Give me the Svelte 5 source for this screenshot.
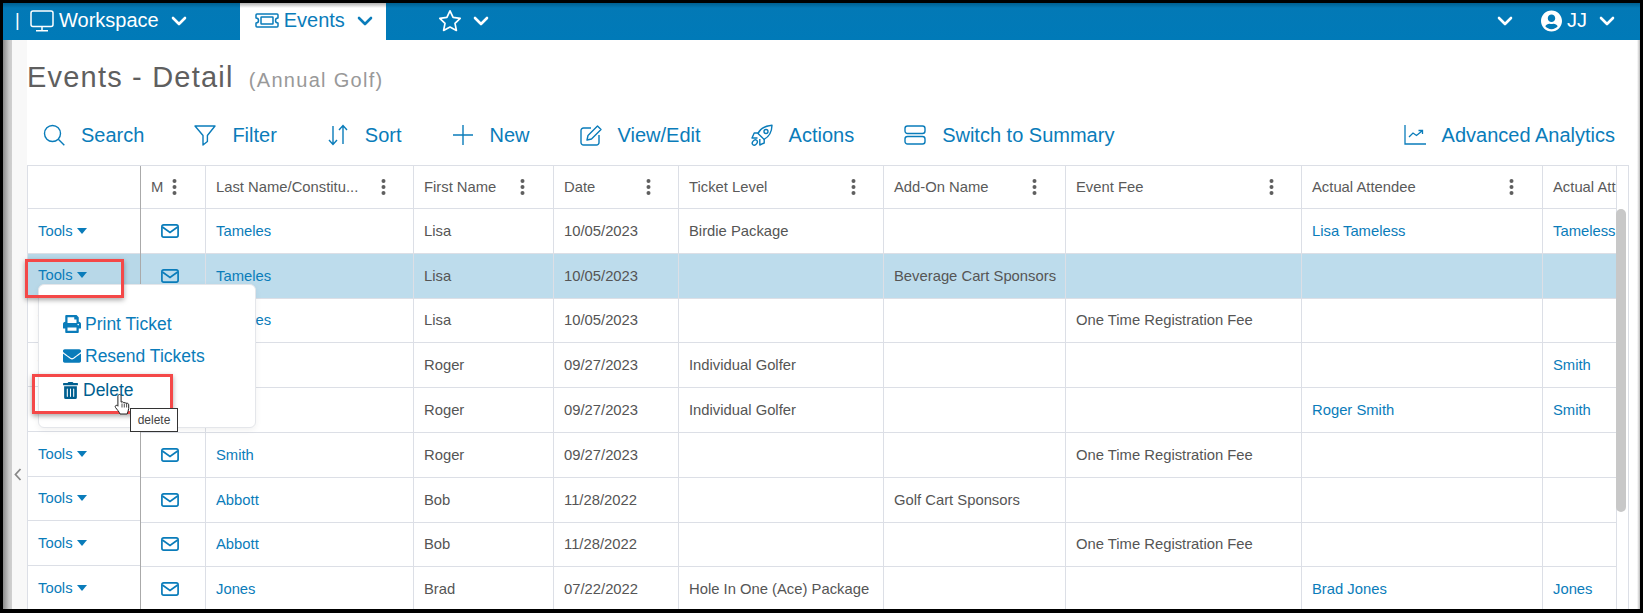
<script>
  const cols = [
    { name: 'M', w: 65, kebab: 31 },
    { name: 'Last Name/Constitu...', w: 208, kebab: 175 },
    { name: 'First Name', w: 140, kebab: 106 },
    { name: 'Date', w: 125, kebab: 92 },
    { name: 'Ticket Level', w: 205, kebab: 172 },
    { name: 'Add-On Name', w: 182, kebab: 148 },
    { name: 'Event Fee', w: 236, kebab: 203 },
    { name: 'Actual Attendee', w: 241, kebab: 207 },
    { name: 'Actual Att', w: 200, kebab: 0 }
  ];
  const rows = [
    ['Tameles', 'Lisa', '10/05/2023', 'Birdie Package', '', '', 'Lisa Tameless', 'Tameless'],
    ['Tameles', 'Lisa', '10/05/2023', '', 'Beverage Cart Sponsors', '', '', ''],
    ['Tameles', 'Lisa', '10/05/2023', '', '', 'One Time Registration Fee', '', ''],
    ['Smith', 'Roger', '09/27/2023', 'Individual Golfer', '', '', '', 'Smith'],
    ['Smith', 'Roger', '09/27/2023', 'Individual Golfer', '', '', 'Roger Smith', 'Smith'],
    ['Smith', 'Roger', '09/27/2023', '', '', 'One Time Registration Fee', '', ''],
    ['Abbott', 'Bob', '11/28/2022', '', 'Golf Cart Sponsors', '', '', ''],
    ['Abbott', 'Bob', '11/28/2022', '', '', 'One Time Registration Fee', '', ''],
    ['Jones', 'Brad', '07/22/2022', 'Hole In One (Ace) Package', '', '', 'Brad Jones', 'Jones']
  ];
  const widths = cols.map((c) => c.w + 'px').join(' ');
  const linkCols = [0, 6, 7];
</script>

{#snippet chevron()}
  <svg class="chev" viewBox="0 0 16 10" width="16" height="10"><path d="M2 2l6 6 6-6" fill="none" stroke="currentColor" stroke-width="2.6" stroke-linecap="round" stroke-linejoin="round"/></svg>
{/snippet}

{#snippet mail()}
  <svg viewBox="0 0 18 14" width="18" height="14"><rect x="0.9" y="0.9" width="16.2" height="12.2" rx="1.8" fill="none" stroke="#0a7cba" stroke-width="1.7"/><path d="M1.4 3l7.6 5.4L16.6 3" fill="none" stroke="#0a7cba" stroke-width="1.7"/></svg>
{/snippet}

<div class="frame">
  <nav class="nav">
    <span class="bar">|</span>
    <div class="nav-item workspace">
      <svg viewBox="0 0 24 22" width="24" height="22" fill="none" stroke="#fff" stroke-width="1.5"><rect x="1" y="1" width="22" height="15.500" rx="2"/><path d="M12 16.500v4M6 20.700h12"/></svg>
      <span>Workspace</span>
      {@render chevron()}
    </div>
    <div class="nav-item tab">
      <svg viewBox="0 0 24 15" width="24" height="15" fill="none" stroke="#0a7cba" stroke-width="1.5"><path d="M2 1h20a1 1 0 0 1 1 1v3a2.500 2.500 0 0 0 0 5v3a1 1 0 0 1-1 1H2a1 1 0 0 1-1-1v-3a2.500 2.500 0 0 0 0-5V2a1 1 0 0 1 1-1z" stroke-linejoin="round"/><rect x="6" y="4" width="12" height="7" rx="0.5"/></svg>
      <span>Events</span>
      {@render chevron()}
    </div>
    <div class="nav-item star">
      <svg viewBox="0 0 24 23" width="24" height="23" fill="none" stroke="#fff" stroke-width="1.7" stroke-linejoin="round"><path d="M12 1.800l3.100 6.600 7.100.9-5.200 5 1.400 7.100L12 18l-6.400 3.400L7 14.300l-5.200-5 7.100-.9z"/></svg>
      {@render chevron()}
    </div>
    <div class="nav-right">
      {@render chevron()}
      <svg class="user" viewBox="0 0 496 512" width="21" height="22" fill="#fff"><path d="M248 8C111 8 0 119 0 256s111 248 248 248 248-111 248-248S385 8 248 8zm0 96c48.6 0 88 39.4 88 88s-39.4 88-88 88-88-39.4-88-88 39.4-88 88-88zm0 344c-58.7 0-111.3-26.6-146.5-68.2 18.8-35.4 55.6-59.8 98.5-59.8 2.4 0 4.8.4 7.1 1.1 13 4.2 26.6 6.9 40.9 6.9 14.3 0 28-2.7 40.9-6.9 2.3-.7 4.7-1.1 7.1-1.1 42.9 0 79.7 24.4 98.5 59.8C359.3 421.4 306.7 448 248 448z"/></svg>
      <span class="jj">JJ</span>
      {@render chevron()}
    </div>
  </nav>

  <div class="body">
    <aside class="rail">
      <svg viewBox="0 0 8 13" width="8" height="13"><path d="M6.500 1L1.500 6.500l5 5.500" fill="none" stroke="#888" stroke-width="1.800"/></svg>
    </aside>

    <main class="main">
      <h1 class="title">Events - Detail <small>(Annual Golf)</small></h1>

      <div class="toolbar">
        <button class="tool">
          <svg viewBox="0 0 22 22" width="22" height="22" fill="none" stroke="currentColor" stroke-width="1.4"><circle cx="9.500" cy="9.500" r="8"/><path d="M15.300 15.300l6 6"/></svg>
          Search
        </button>
        <button class="tool">
          <svg viewBox="0 0 22 22" width="22" height="22" fill="none" stroke="currentColor" stroke-width="1.4" stroke-linejoin="round"><path d="M1 2h20l-7.600 9.500v6L9 21v-9.500z"/></svg>
          Filter
        </button>
        <button class="tool">
          <svg viewBox="0 0 22 22" width="22" height="22" fill="none" stroke="currentColor" stroke-width="1.4"><path d="M6 2v18M2 16l4 4.500 4-4.500M16 20V2M12 6l4-4.500L20 6"/></svg>
          Sort
        </button>
        <button class="tool">
          <svg viewBox="0 0 22 22" width="22" height="22" fill="none" stroke="currentColor" stroke-width="1.4"><path d="M11 1v20M1 11h20"/></svg>
          New
        </button>
        <button class="tool">
          <svg viewBox="0 0 22 22" width="22" height="22" fill="none" stroke="currentColor" stroke-width="1.4" stroke-linejoin="round"><path d="M11 4H3.500A2.500 2.500 0 0 0 1 6.500v12A2.500 2.500 0 0 0 3.500 21h13a2.500 2.500 0 0 0 2.500-2.500V11"/><path d="M8 11.500L17.500 2 21 5.500 11.500 15 7 16z"/></svg>
          View/Edit
        </button>
        <button class="tool">
          <svg viewBox="0 0 22 22" width="22" height="22" fill="none" stroke="currentColor" stroke-width="1.400" stroke-linejoin="round"><path d="M7 9.500C9 5 14 1.800 21 1.200 20.800 8 17.500 13 13 15.300z"/><circle cx="15" cy="7.500" r="2"/><path d="M7.300 9H3.200L1 14h5.500M13.200 15v4L8.800 21v-6"/><ellipse cx="3.800" cy="18.500" rx="2.200" ry="2.900" transform="rotate(40 3.800 18.500)"/></svg>
          Actions
        </button>
        <button class="tool">
          <svg viewBox="0 0 22 22" width="22" height="22" fill="none" stroke="currentColor" stroke-width="1.4"><rect x="1" y="2" width="20" height="7.500" rx="2.500"/><rect x="1" y="12.500" width="20" height="7.500" rx="2.500"/></svg>
          Switch to Summary
        </button>
        <button class="tool analytics">
          <svg viewBox="0 0 22 20" width="22" height="20" fill="none" stroke="currentColor" stroke-width="1.3"><path d="M1 0v19h21"/><path d="M5 12l4-4 3.500 2.500L18 6m-3.500-.5H18.500V9"/></svg>
          Advanced Analytics
        </button>
      </div>

      <div class="table">
        <div class="frozen">
          <div class="frozen-head"></div>
          {#each rows as row, i}
            <div class="frozen-row" class:active={i === 1}>
              <span class="link">Tools</span>
              <svg viewBox="0 0 10 6" width="10" height="6"><path d="M0 0h10L5 6z" fill="#0a7cba"/></svg>
            </div>
          {/each}
        </div>

        <div class="pane">
          <div class="head" style="grid-template-columns: {widths}">
            {#each cols as c}
              <div class="th">
                <span class="th-label">{c.name}</span>
                {#if c.kebab}
                  <svg class="kebab" style="left: {c.kebab}px" viewBox="0 0 5 18" width="5" height="18"><circle cx="2.500" cy="3" r="2" /><circle cx="2.500" cy="9" r="2" /><circle cx="2.500" cy="15" r="2" /></svg>
                {/if}
              </div>
            {/each}
          </div>
          {#each rows as row, i}
            <div class="row" class:active={i === 1} style="grid-template-columns: {widths}">
              <div class="td center">{@render mail()}</div>
              {#each row as cell, j}
                <div class="td" class:link={linkCols.includes(j)}>{cell}</div>
              {/each}
            </div>
          {/each}
        </div>

        <div class="gutter"><div class="thumb"></div></div>

        <div class="menu">
          <div class="menu-item">
            <svg viewBox="0 0 512 512" width="18" height="18" fill="currentColor"><path d="M448 192V77.250c0-8.490-3.370-16.620-9.370-22.630L393.370 9.370c-6-6-14.140-9.370-22.630-9.370H96C78.330 0 64 14.330 64 32v160c-35.350 0-64 28.650-64 64v112c0 8.840 7.160 16 16 16h48v96c0 17.670 14.330 32 32 32h320c17.670 0 32-14.330 32-32v-96h48c8.840 0 16-7.160 16-16V256c0-35.350-28.650-64-64-64zm-64 256H128v-96h256v96zm0-224H128V64h192v48c0 8.840 7.160 16 16 16h48v96zm48 72c-13.250 0-24-10.750-24-24 0-13.260 10.750-24 24-24s24 10.740 24 24c0 13.250-10.750 24-24 24z"/></svg>
            Print Ticket
          </div>
          <div class="menu-item">
            <svg viewBox="0 64 512 384" width="18" height="14" fill="currentColor"><path d="M502.300 190.800c3.900-3.100 9.700-.2 9.700 4.700V400c0 26.500-21.500 48-48 48H48c-26.500 0-48-21.500-48-48V195.600c0-5 5.700-7.800 9.700-4.700 22.400 17.400 52.100 39.500 154.100 113.600 21.100 15.400 56.700 47.800 92.200 47.600 35.700.3 72-32.800 92.300-47.600 102-74.100 131.600-96.300 154-113.700zM256 320c23.200.4 56.600-29.200 73.400-41.400 132.700-96.300 142.800-104.700 173.400-128.700 5.800-4.500 9.200-11.500 9.200-18.900v-19c0-26.500-21.500-48-48-48H48C21.500 64 0 85.500 0 112v19c0 7.400 3.400 14.300 9.200 18.900 30.600 23.900 40.700 32.400 173.400 128.700 16.800 12.200 50.200 41.800 73.400 41.400z"/></svg>
            Resend Tickets
          </div>
          <div class="menu-item hover">
            <svg viewBox="0 0 448 512" width="15" height="17" fill="currentColor"><path d="M32 464a48 48 0 0 0 48 48h288a48 48 0 0 0 48-48V128H32zm272-256a16 16 0 0 1 32 0v224a16 16 0 0 1-32 0zm-96 0a16 16 0 0 1 32 0v224a16 16 0 0 1-32 0zm-96 0a16 16 0 0 1 32 0v224a16 16 0 0 1-32 0zM432 32H312l-9.400-18.700A24 24 0 0 0 281.100 0H166.800a23.720 23.720 0 0 0-21.400 13.300L136 32H16A16 16 0 0 0 0 48v32a16 16 0 0 0 16 16h416a16 16 0 0 0 16-16V48a16 16 0 0 0-16-16z"/></svg>
            Delete
          </div>
        </div>

        <div class="mark mark-tools"></div>
        <div class="mark mark-delete"></div>
        <div class="tooltip">delete</div>
        <svg class="cursor" viewBox="0 0 17 22" width="17" height="22"><path d="M5.500 1.500c1 0 1.600.7 1.600 1.600v6l1.200-.3c.8 0 1.100.4 1.200.8l1.200-.1c.7 0 1 .4 1.100.8l1.100-.1c1 0 1.800.6 1.800 1.800v3.500c0 2-1.200 3.500-1.500 5.500H6c-.6-2-3-4.500-4.500-6.500-.6-.9-.2-2 .8-2.200.7-.1 1.300.4 1.600.9V3.100c0-.9.600-1.600 1.600-1.600z" fill="#fff" stroke="#222" stroke-width="1"/><path d="M8 10.500v4M10.300 10.500v4M12.600 10.500v4" stroke="#222" stroke-width=".8" fill="none"/></svg>
      </div>
    </main>
  </div>
</div>

<style>
  :global(body) {
    margin: 0;
    background: #fff;
  }
  .frame {
    width: 1643px;
    height: 613px;
    box-sizing: border-box;
    border: solid #000;
    border-width: 3px 3px 4px;
    display: flex;
    flex-direction: column;
    overflow: hidden;
    font-family: "Liberation Sans", Arial, sans-serif;
    color: #555;
    background: #fff;
  }
  .nav {
    height: 37px;
    flex-shrink: 0;
    background: linear-gradient(#005f90 0, #0379b6 5px, #007ab8 100%);
    color: #fff;
    display: flex;
    align-items: stretch;
    font-size: 20px;
  }
  .bar {
    margin-left: 12px;
    width: 15px;
    display: flex;
    align-items: center;
    font-size: 18px;
    padding-bottom: 2px;
  }
  .nav-item {
    display: flex;
    align-items: center;
    padding-bottom: 2px;
  }
  .workspace svg:first-child { margin-right: 5px; }
  .chev { margin-left: 12px; }
  .tab {
    margin-left: 53px;
    width: 146px;
    box-sizing: border-box;
    padding-left: 15px;
    background: linear-gradient(#b0b0b0 0, #fff 5px);
    color: #0a7cba;
  }
  .tab svg:first-child { margin-right: 5px; }
  .star { margin-left: 52px; }
  .star :global(.chev) { margin-left: 11px; }
  .nav-right {
    margin-left: auto;
    display: flex;
    align-items: center;
    padding: 0 25px 2px 0;
  }
  .nav-right > :global(.chev) { margin-left: 0; }
  .user { margin-left: 28px; margin-right: 5px; }
  .jj { margin-right: 12px; }
  .body {
    flex: 1;
    min-height: 0;
    display: flex;
  }
  .rail {
    width: 24px;
    flex-shrink: 0;
    display: flex;
    align-items: flex-start;
    justify-content: flex-end;
    padding: 428px 5px 0 0;
    box-sizing: border-box;
    background: linear-gradient(90deg, #8a8a8a 0, #c8c8c8 6px, #d0d0d0 9px, #f8f8f8 9px);
  }
  .main {
    flex: 1;
    min-width: 0;
    display: flex;
    flex-direction: column;
    padding-right: 11px;
    background: linear-gradient(270deg, #bbb 0, #fff 3px);
  }
  .title {
    margin: 19px 0 0;
    height: 36px;
    line-height: 36px;
    font-size: 29px;
    font-weight: 400;
    letter-spacing: 1.2px;
    color: #5f5f5f;
    white-space: nowrap;
  }
  .title small {
    font-size: 20px;
    letter-spacing: 1.3px;
    color: #999;
    margin-left: 6px;
  }
  .toolbar {
    margin-top: 25px;
    height: 30px;
    display: flex;
    align-items: center;
    gap: 50px;
    padding: 0 14px 0 16px;
  }
  .tool {
    all: unset;
    display: flex;
    align-items: center;
    gap: 16px;
    font-size: 20px;
    color: #0a7cba;
    white-space: nowrap;
  }
  .analytics { margin-left: auto; }
  .table {
    position: relative;
    margin-top: 15px;
    flex: 1;
    min-height: 0;
    display: flex;
    border-left: 1px solid #dcdfe6;
    border-top: 1px solid #dcdfe6;
    font-size: 14.8px;
    background: #fff;
  }
  .frozen {
    width: 113px;
    flex-shrink: 0;
    box-sizing: border-box;
    border-right: 1px solid #aaa;
  }
  .frozen-head {
    height: 43px;
    box-sizing: border-box;
    border-bottom: 1px solid #dcdfe6;
  }
  .frozen-row {
    height: 44.6px;
    box-sizing: border-box;
    padding-left: 10px;
    display: flex;
    align-items: center;
    gap: 4px;
    border-bottom: 1px solid #dcdfe6;
  }
  .frozen-row.active { background: #b8d8e8; }
  .pane {
    flex: 1;
    min-width: 0;
    overflow: hidden;
    border-right: 1px solid #dcdfe6;
  }
  .head, .row {
    display: grid;
    box-sizing: border-box;
    border-bottom: 1px solid #dcdfe6;
  }
  .head { height: 43px; }
  .row { height: 44.8px; }
  .row.active { background: #bddcec; }
  .th {
    position: relative;
    display: flex;
    align-items: center;
    padding-left: 10px;
    border-right: 1px solid #dcdfe6;
    white-space: nowrap;
    overflow: hidden;
    color: #5a5a5a;
  }
  .kebab {
    position: absolute;
    top: 12px;
    fill: #5f5f5f;
  }
  .td {
    display: flex;
    align-items: center;
    padding-left: 10px;
    border-right: 1px solid #dcdfe6;
    white-space: nowrap;
    overflow: hidden;
  }
  .td.center {
    padding-left: 20px;
  }
  .link { color: #0a7cba; }
  .gutter {
    width: 11px;
    flex-shrink: 0;
    border-right: 1px solid #dcdfe6;
    padding-top: 43px;
  }
  .thumb {
    width: 10px;
    height: 303px;
    background: #c8c8c8;
    border-radius: 5px;
    position: relative;
    left: -1px;
  }
  .menu {
    position: absolute;
    left: 10px;
    top: 118px;
    width: 218px;
    height: 144px;
    box-sizing: border-box;
    padding: 23px 0 0 24px;
    background: #fff;
    border: 1px solid #e4e6ea;
    border-radius: 6px;
    box-shadow: 0 2px 6px rgba(0, 0, 0, 0.06);
    font-size: 17.5px;
    color: #0a7cba;
  }
  .menu-item {
    height: 32px;
    display: flex;
    align-items: center;
    gap: 4px;
    white-space: nowrap;
  }
  .menu-item.hover {
    color: #005f90;
    margin-top: 2px;
    gap: 5px;
  }
  .mark {
    position: absolute;
    box-sizing: border-box;
    border: 3px solid #f44848;
    box-shadow: 0 2px 5px rgba(0, 0, 0, 0.35);
  }
  .mark-tools {
    left: -3px;
    top: 93px;
    width: 99px;
    height: 39px;
  }
  .mark-delete {
    left: 4px;
    top: 208px;
    width: 141px;
    height: 40px;
  }
  .tooltip {
    position: absolute;
    left: 102px;
    top: 242px;
    width: 48px;
    height: 24px;
    box-sizing: border-box;
    background: #fff;
    border: 1px solid #333;
    font-size: 12px;
    color: #444;
    display: flex;
    align-items: center;
    justify-content: center;
  }
  .cursor {
    position: absolute;
    left: 86px;
    top: 227px;
  }
</style>
